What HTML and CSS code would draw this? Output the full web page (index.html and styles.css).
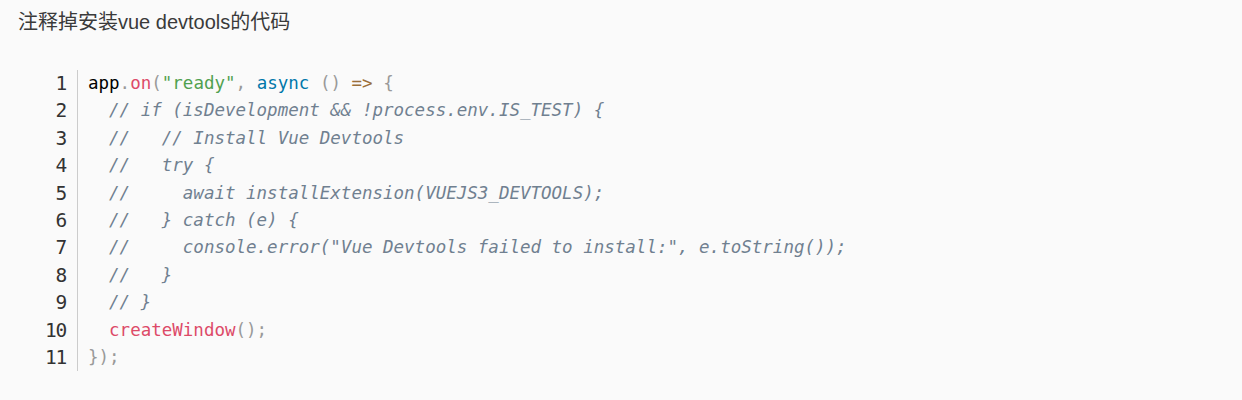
FILE: index.html
```html
<!DOCTYPE html>
<html>
<head>
<meta charset="utf-8">
<link rel="stylesheet" href="styles.css">
</head>
<body>
<div class="page">
  <p class="title">注释掉安装vue devtools的代码</p>
  <div class="code">
    <div class="gutter">
      <span>1</span><span>2</span><span>3</span><span>4</span><span>5</span><span>6</span><span>7</span><span>8</span><span>9</span><span>10</span><span>11</span>
    </div>
<pre class="src"><span class="plain">app</span><span class="p">.</span><span class="fn">on</span><span class="p">(</span><span class="str">"ready"</span><span class="p">,</span> <span class="kw">async</span> <span class="p">()</span> <span class="op">=&gt;</span> <span class="p">{</span>
  <span class="cm">// if (isDevelopment &amp;&amp; !process.env.IS_TEST) {</span>
  <span class="cm">//   // Install Vue Devtools</span>
  <span class="cm">//   try {</span>
  <span class="cm">//     await installExtension(VUEJS3_DEVTOOLS);</span>
  <span class="cm">//   } catch (e) {</span>
  <span class="cm">//     console.error("Vue Devtools failed to install:", e.toString());</span>
  <span class="cm">//   }</span>
  <span class="cm">// }</span>
  <span class="fn">createWindow</span><span class="p">();</span>
<span class="p">});</span></pre>
  </div>
</div>
</body>
</html>
```

FILE: styles.css
```css
html, body {
  margin: 0;
  padding: 0;
  background: #fafafa;
}
.page {
  padding: 10px 18px 0 18px;
}
.title {
  margin: 0;
  font-family: "Liberation Sans", "Noto Sans CJK SC", sans-serif;
  font-size: 20px;
  line-height: 24px;
  color: #3a3a3a;
}
.code {
  display: flex;
  margin-top: 36px;
  margin-left: 26px;
  font-family: "DejaVu Sans Mono", monospace;
  font-size: 17.5px;
  line-height: 27.4px;
}
.gutter {
  display: flex;
  flex-direction: column;
  align-items: flex-end;
  padding-right: 11px;
  border-right: 1px solid #cccccc;
  color: #333;
  width: 22px;
  font-size: 19.5px;
  letter-spacing: -1.2px;
}
.gutter span {
  height: 27.4px;
  line-height: 27.4px;
}
.src {
  margin: 0;
  padding-left: 10px;
  font: inherit;
  color: #000;
}
.p { color: #999999; }
.fn { color: #dd4a68; }
.str { color: #50a14f; }
.kw { color: #0077aa; }
.op { color: #9a6e3a; }
.cm { color: #708090; font-style: italic; }
```
